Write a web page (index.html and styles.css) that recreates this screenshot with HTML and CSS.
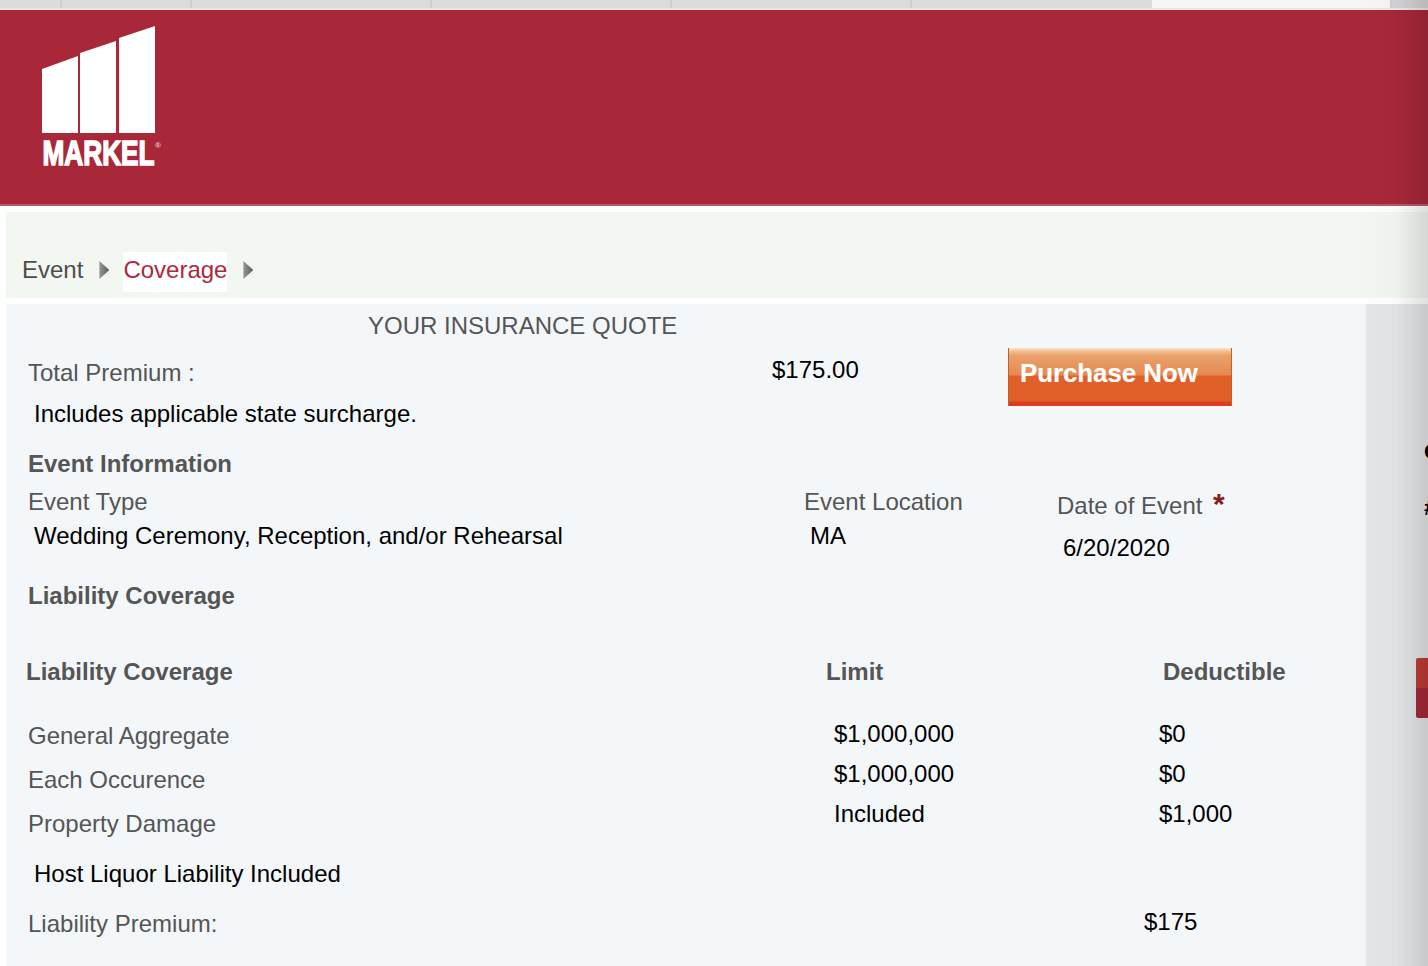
FILE: index.html
```html
<!DOCTYPE html>
<html lang="en">
<head>
<meta charset="utf-8">
<title>Markel Event Insurance Quote</title>
<link rel="stylesheet" href="styles.css">
</head>
<body>
<div class="tabs">
  <div class="tab tab-a"></div>
  <div class="tab tab-b"></div>
  <div class="tab tab-c"></div>
  <div class="tab tab-c"></div>
  <div class="tab tab-c"></div>
  <div class="tab tab-d"></div>
  <div class="tab tab-active"></div>
  <div class="tab tab-end"></div>
</div>
<header class="brand">
  <svg class="logo" width="122" height="146" viewBox="0 0 122 146" role="img" aria-label="Markel">
    <polygon points="0,43 36,30 36,107 0,107" fill="#fff"/>
    <polygon points="38,27 74,15 74,107 38,107" fill="#fff"/>
    <polygon points="77,12 113,0 113,107 77,107" fill="#fff"/>
    <text x="0.5" y="139" class="logo-word" textLength="112" lengthAdjust="spacingAndGlyphs">MARKEL</text>
    <text x="113" y="122" class="logo-reg">®</text>
  </svg>
</header>
<nav class="steps">
  <span class="step">Event</span>
  <span class="arrow"></span>
  <span class="step step-current">Coverage</span>
  <span class="arrow"></span>
</nav>
<div class="page">
  <main class="quote">
    <h1 class="quote-title">YOUR INSURANCE QUOTE</h1>
    <section class="row-total">
      <div class="stack-total">
        <div class="label">Total Premium :</div>
        <div class="value">Includes applicable state surcharge.</div>
      </div>
      <div class="total-amount">$175.00</div>
      <div><a class="buy" href="#">Purchase Now</a></div>
    </section>
    <h2 class="heading heading-event">Event Information</h2>
    <section class="row-event">
      <div class="stack-event">
        <div class="label">Event Type</div>
        <div class="value">Wedding Ceremony, Reception, and/or Rehearsal</div>
      </div>
      <div class="stack-event">
        <div class="label">Event Location</div>
        <div class="value">MA</div>
      </div>
      <div class="stack-date">
        <div class="label">Date of Event <span class="req">*</span></div>
        <div class="value">6/20/2020</div>
      </div>
    </section>
    <h2 class="heading heading-liab">Liability Coverage</h2>
    <section class="row-head">
      <div class="heading">Liability Coverage</div>
      <div class="heading">Limit</div>
      <div class="heading">Deductible</div>
    </section>
    <section class="row-limits">
      <div class="stack-names">
        <div class="label">General Aggregate</div>
        <div class="label">Each Occurence</div>
        <div class="label">Property Damage</div>
      </div>
      <div class="stack-nums">
        <div class="amount">$1,000,000</div>
        <div class="amount">$1,000,000</div>
        <div class="amount">Included</div>
      </div>
      <div class="stack-nums">
        <div class="amount">$0</div>
        <div class="amount">$0</div>
        <div class="amount">$1,000</div>
      </div>
    </section>
    <div class="value host">Host Liquor Liability Included</div>
    <section class="row-premium">
      <div class="label premium-label">Liability Premium:</div>
      <div class="amount">$175</div>
    </section>
  </main>
  <aside class="side">
    <div class="side-c">C</div>
    <div class="side-hash">#</div>
    <div class="side-tab"></div>
  </aside>
</div>
<div class="vignette"></div>
</body>
</html>
```
FILE: styles.css
```css
* { box-sizing: border-box; }
html, body { margin: 0; height: 966px; overflow: hidden; background: #fff; }
body { position: relative; font-family: "Liberation Sans", Arial, sans-serif; font-size: 24px; line-height: 28px; color: #000; }

.vignette { position: absolute; top: 0; right: 0; bottom: 0; width: 72px; pointer-events: none; background: linear-gradient(90deg, rgba(0,0,0,0), rgba(0,0,0,.02) 55%, rgba(0,0,0,.13) 100%); }

.tabs { display: flex; height: 10px; background: #dcdcdc; border-bottom: 2px solid #e9e9e9; }
.tab { height: 8px; border-right: 2px solid #cfcfcf; }
.tab-a { width: 62px; }
.tab-b { width: 130px; }
.tab-c { width: 240px; }
.tab-d { width: 240px; border-right: 0; }
.tab-active { width: 238px; background: #f6f6f6; border-right: 0; }
.tab-end { flex: 1; border: 0; border-left: 2px solid #d0d0d0; background: #d4d4d4; }

.brand { height: 196px; padding: 16px 0 0 42px; background: #a82839; border-bottom: 2px solid #b85a67; }
.logo { display: block; }
.logo-word { font-family: "Liberation Sans", Arial, sans-serif; font-weight: 700; font-size: 35px; fill: #fff; stroke: #fff; stroke-width: 1.6px; }
.logo-reg { font-family: "Liberation Sans", Arial, sans-serif; font-size: 8px; font-weight: 700; fill: #eec9cd; }

.steps { display: flex; align-items: center; height: 86px; margin: 6px 0 6px 6px; padding: 40px 0 6px 16px; background: #f3f7f2; color: #4d4d4d; }
.step { display: block; line-height: 36px; padding-bottom: 4px; }
.step-current { color: #ad2a3c; background: #fff; width: 104px; }
.arrow { width: 10px; height: 18px; margin: 0 14px 4px 16px; background: linear-gradient(90deg, #9a9a9a, #5c5c5c); clip-path: polygon(0 0, 100% 50%, 0 100%); }

.page { display: flex; height: 662px; margin-left: 6px; }
.quote { width: 1360px; padding: 8px 0 0 22px; background: #f3f7fa; color: #000; }
.side { position: relative; flex: 1; overflow: hidden; background: #e5e6e8; padding: 134px 0 0 58px; font-weight: 700; font-size: 22px; line-height: 28px; }
.side-hash { margin-top: 28px; }
.side-tab { position: absolute; top: 354px; right: 0; width: 12px; height: 60px; border-radius: 2px 0 0 2px; background: linear-gradient(#bf3a36 0, #bf3a36 50%, #a52a38 50%); }

.quote-title { margin: 0 0 8px 340px; font-size: 24px; font-weight: 400; line-height: 28px; color: #555; }
.label { color: #555; }
.value { padding-left: 6px; }
.heading { font-weight: 700; color: #555; }
h2.heading { margin-bottom: 0; font-size: 24px; line-height: 28px; }

.row-total { display: grid; grid-template-columns: 744px 236px 1fr; }
.stack-total { display: flex; flex-direction: column; gap: 13px; padding-top: 11px; }
.total-amount { padding-top: 8px; }
.buy { display: block; width: 224px; height: 58px; padding: 10px 0 0 11px; font-size: 25.8px; line-height: 30px; font-weight: 700; color: #fff; text-decoration: none; text-shadow: 0 0 1px rgba(255,255,255,.4); border-left: 1px solid #c0611f; border-right: 1px solid #c0641e; background: linear-gradient(#fbe3cc 0, #f0b98a 4px, #e9a06a 8px, #e58a50 27px, #e0602a 28px, #e06028 53px, #dd3c1e 54px, #dd3c1e 100%); }

.heading-event { margin: 22px 0 0; }
.row-event { display: grid; grid-template-columns: 776px 253px 1fr; margin-top: 10px; }
.stack-event { display: flex; flex-direction: column; gap: 6px; }
.stack-date { display: flex; flex-direction: column; gap: 14px; padding-top: 4px; }
.req { color: #8a1a1a; font-weight: 700; font-size: 30px; margin-left: 4px; line-height: 24px; }

.heading-liab { margin: 20px 0 0; }
.row-head { display: grid; grid-template-columns: 800px 337px 1fr; margin: 48px 0 0 -2px; }

.row-limits { display: grid; grid-template-columns: 806px 325px 1fr; margin-top: 34px; }
.stack-names { display: flex; flex-direction: column; gap: 16px; padding-top: 2px; }
.stack-nums { display: flex; flex-direction: column; gap: 12px; }

.host { margin-top: 22px; }
.row-premium { display: grid; grid-template-columns: 1116px 1fr; margin-top: 20px; }
.premium-label { padding-top: 2px; }
```
